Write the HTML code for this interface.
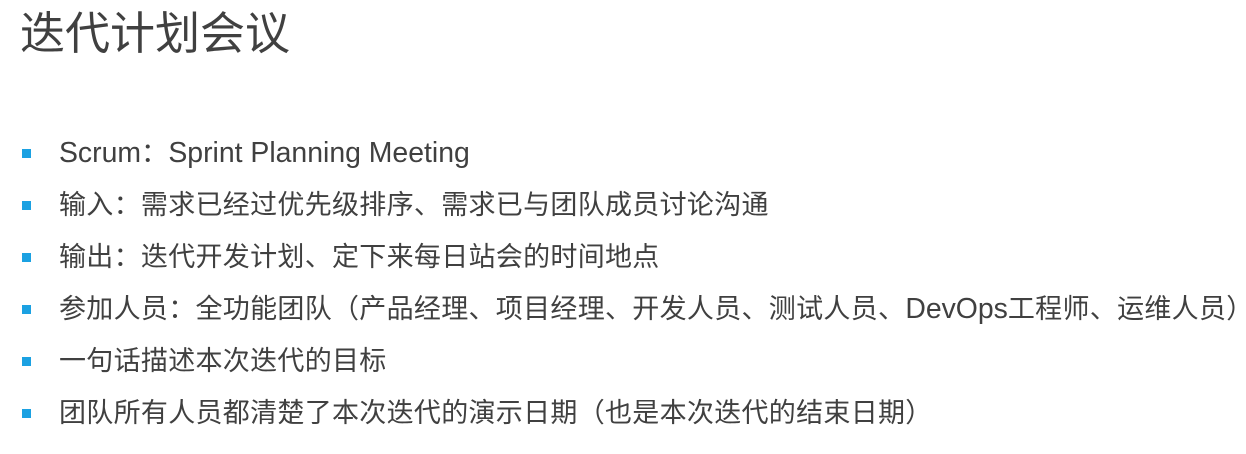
<!DOCTYPE html>
<html><head><meta charset="utf-8"><style>
html,body{margin:0;padding:0;background:#fff;width:1246px;height:454px;overflow:hidden}
body{font-family:"Liberation Sans","Noto Sans CJK SC",sans-serif;color:#404040;position:relative}
h1{position:absolute;left:20px;top:4px;margin:0;font-weight:normal;font-size:45px;line-height:60px}
.li{position:absolute;left:59px;font-size:27px;line-height:34px;white-space:nowrap;letter-spacing:0.3px}
.li:before{content:"";position:absolute;left:-37px;top:13px;width:9px;height:9px;background:#1ba1e2}
.l{font-size:28.4px;letter-spacing:0}
</style></head><body>
<h1>迭代计划会议</h1>
<div class="li" style="top:136px"><span class="l">Scrum</span>：<span class="l">Sprint Planning Meeting</span></div>
<div class="li" style="top:188px">输入：需求已经过优先级排序、需求已与团队成员讨论沟通</div>
<div class="li" style="top:240px">输出：迭代开发计划、定下来每日站会的时间地点</div>
<div class="li" style="top:292px">参加人员：全功能团队（产品经理、项目经理、开发人员、测试人员、<span class="l">DevOps</span>工程师、运维人员）</div>
<div class="li" style="top:344px">一句话描述本次迭代的目标</div>
<div class="li" style="top:396px">团队所有人员都清楚了本次迭代的演示日期（也是本次迭代的结束日期）</div>
</body></html>
